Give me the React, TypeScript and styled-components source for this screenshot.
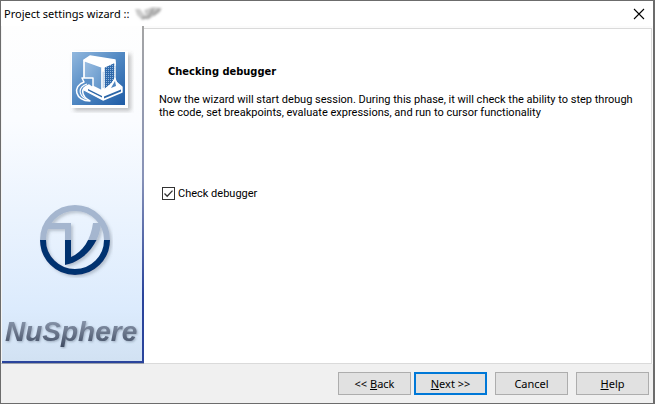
import React, { useState } from "react";
import styled, { createGlobalStyle, css } from "styled-components";

const GlobalStyle = createGlobalStyle`
  *, *::before, *::after { box-sizing: border-box; }
  html, body, #root { height: 100%; margin: 0; }
  body {
    font-family: Roboto, Tahoma, sans-serif;
    font-size: 11px;
    line-height: 13px;
    color: #000;
  }
`;

const Window = styled.form`
  display: flex;
  flex-direction: column;
  min-height: 100%;
  border: 1px solid #6c6c6c;
  border-right-width: 2px;
  background: #f0f0f0;
`;

const TitleBar = styled.header`
  display: flex;
  align-items: center;
  justify-content: space-between;
  height: 25px;
  flex: none;
  padding: 0 8px 0 3px;
  background: #fff;
`;

const Title = styled.h1`
  display: flex;
  align-items: center;
  gap: 3px;
  margin: 0;
  font: 400 11px/16px "Noto Sans", sans-serif;
`;

const CloseButton = styled.button`
  display: flex;
  padding: 0;
  border: 0;
  background: none;
`;

const Body = styled.div`
  display: flex;
  flex: 1;
  background: #fbfbfb;
`;

const Sidebar = styled.aside`
  display: flex;
  flex-direction: column;
  align-items: center;
  width: 143px;
  flex: none;
  padding: 21px 0 14px 0;
  border-left: 1px solid #f4f4f4;
  border-bottom: 1px solid #9aa0ac;
  background:
    linear-gradient(#a5a5a5, #8792b8 45%, #2a449c 80%) right / 2px 100% no-repeat,
    linear-gradient(#2a449c, #2a449c) bottom / 100% 2px no-repeat,
    linear-gradient(#fefefe, #fafcff 28%, #dcebfd 84%, #d1e1f2);
`;

const WizardIcon = styled.svg`
  align-self: flex-end;
  margin-right: 10px;
`;

const Emblem = styled.svg`
  margin-top: 89px;
  margin-left: 4px;
`;

const Wordmark = styled.svg`
  margin-top: auto;
`;

const Content = styled.main`
  flex: 1;
  margin: 2px 1px 0 0;
  padding: 36px 16px 16px 15px;
  border: 1px solid #dadada;
  border-left: 0;
  background: #fff;
`;

const Heading = styled.h2`
  margin: 0 0 14px 9px;
  font: 700 11px/14px "DejaVu Sans Condensed", Tahoma, sans-serif;
`;

const Description = styled.p`
  margin: 0;
  max-width: 480px;
`;

const CheckLabel = styled.label`
  display: flex;
  align-items: center;
  gap: 3px;
  width: max-content;
  margin: 68px 0 0 3px;
`;

const CheckBox = styled.input`
  appearance: none;
  width: 13px;
  height: 13px;
  margin: 0;
  border: 1px solid #333;
  background: #fff;

  &:checked {
    background: url("data:image/svg+xml,%3Csvg xmlns='http://www.w3.org/2000/svg' viewBox='0 0 11 11'%3E%3Cpath d='M1.5 5.5l2.7 2.7 5.3-5.6' fill='none' stroke='%23333' stroke-width='1.3'/%3E%3C/svg%3E");
  }
`;

const Footer = styled.footer`
  display: flex;
  justify-content: flex-end;
  gap: 8px;
  flex: none;
  height: 39px;
  padding: 8px 4px 0 0;
`;

const Button = styled.button<{ $primary?: boolean; $joined?: boolean }>`
  width: 73px;
  height: 23px;
  padding: 0;
  border: 1px solid #adadad;
  background: #e1e1e1;
  color: #000;
  font: 400 11px/13px "Noto Sans", sans-serif;
  ${(p) => p.$primary && css`border: 2px solid #0078d7;`}
  ${(p) => p.$joined && css`margin-right: -5px;`}
`;

export default function App() {
  const [checked, setChecked] = useState(true);
  return (
    <>
      <GlobalStyle />
      <Window onSubmit={(e: React.FormEvent) => e.preventDefault()}>
        <TitleBar>
          <Title>
            Project settings wizard ::
            <svg width="32" height="16" viewBox="0 0 32 16" aria-hidden="true">
              <defs>
                <filter id="soft"><feGaussianBlur stdDeviation="1.3" /></filter>
              </defs>
              <g filter="url(#soft)">
                <path d="M3 3h5l7 9-5 2-5-5z" fill="#ccc" />
                <path d="M12 4l9-3 9 1-3 5-5 3-7 4z" fill="#ccc" />
                <path d="M10 12l7-1 4-8M21 9l7-6" fill="none" stroke="#aaa" strokeWidth="3" />
              </g>
            </svg>
          </Title>
          <CloseButton type="button" aria-label="Close">
            <svg width="12" height="12" viewBox="0 0 12 12">
              <path d="M1 1l10 10M11 1L1 11" stroke="#000" strokeWidth="1.1" />
            </svg>
          </CloseButton>
        </TitleBar>
        <Body>
          <Sidebar>
            <WizardIcon width="66" height="66" viewBox="0 0 66 66" aria-hidden="true">
              <defs>
                <linearGradient id="tile" x1="0" y1="0" x2="1" y2="1">
                  <stop offset="0" stopColor="#92b8de" />
                  <stop offset=".5" stopColor="#4f87c2" />
                  <stop offset="1" stopColor="#1f5ca5" />
                </linearGradient>
                <linearGradient id="panel" x1="0" y1="0" x2="1" y2="1">
                  <stop offset="0" stopColor="#9dbfe2" />
                  <stop offset="1" stopColor="#5d92c8" />
                </linearGradient>
                <pattern id="mesh" width="2" height="2" patternUnits="userSpaceOnUse">
                  <rect width="2" height="2" fill="#2f69ab" />
                  <rect width="1" height="1" fill="#8fb4da" />
                </pattern>
                <filter id="tileShadow" x="-20%" y="-20%" width="150%" height="150%">
                  <feDropShadow dx="3" dy="3" stdDeviation="2" floodColor="#555" floodOpacity=".35" />
                </filter>
              </defs>
              <rect x="3" y="4" width="57" height="57" fill="#fff" filter="url(#tileShadow)" />
              <rect x="4" y="5" width="53" height="53" fill="url(#tile)" />
              <g strokeLinejoin="round" stroke="#fff">
                <path d="M16 38v5l19 10 19-8v-5l-7-6-12 8z" fill="#fff" strokeWidth="1.4" />
                <path d="M36 49.500l17-7v2l-17 7z" fill="#2b66a8" stroke="none" />
                <path d="M20 42l14 7v1.500l-14-7z" fill="#2b66a8" stroke="none" />
                <path d="M16 13l6-4 25 4v5l-12 6z" fill="#fff" strokeWidth="1.5" />
                <path d="M16 13.500l18 6.500v24l-18-9z" fill="url(#panel)" strokeWidth="1.700" />
                <path d="M36 20l11-5v19l-11 9z" fill="url(#mesh)" strokeWidth="1.400" />
                <path d="M39 44l8-13 3 8z" fill="#fff" strokeWidth="1" />
                <path d="M43 41l4-7 1 5z" fill="#4c83be" stroke="none" />
                <path d="M22 54C7 54 4 39 16 35l-2-4h11v10l-4-3c-9 3-8 11 1 16z" fill="#5a90c8" strokeWidth="1.500" />
                <path d="M18 52c-8-4-8-12 1-15" fill="none" strokeWidth="1.200" />
              </g>
            </WizardIcon>
            <Emblem width="76" height="76" viewBox="0 0 76 76" aria-hidden="true">
              <defs>
                <linearGradient id="ring" x1="0" y1="0" x2="0" y2="76" gradientUnits="userSpaceOnUse">
                  <stop offset=".5" stopColor="#a5b6cf" />
                  <stop offset=".5" stopColor="#06316f" />
                </linearGradient>
                <filter id="ringShadow">
                  <feDropShadow dx="2" dy="2" stdDeviation="1.5" floodColor="#456" floodOpacity=".3" />
                </filter>
              </defs>
              <g filter="url(#ringShadow)">
                <circle cx="38" cy="38" r="32" fill="none" stroke="url(#ring)" strokeWidth="6" />
                <path d="M8 21h26v34c12-5 20-18 22-34h8C63 42 46 60 28 63V27H8z" fill="url(#ring)" />
              </g>
            </Emblem>
            <Wordmark width="138" height="36" viewBox="0 0 138 36" role="img" aria-label="NuSphere">
              <defs>
                <linearGradient id="steel" x1="0" y1="0" x2="0" y2="1">
                  <stop offset=".1" stopColor="#8a97ad" />
                  <stop offset=".55" stopColor="#69758a" />
                  <stop offset="1" stopColor="#3f4c62" />
                </linearGradient>
                <filter id="wordShadow">
                  <feDropShadow dx="1" dy="1" stdDeviation="1" floodColor="#456" floodOpacity=".4" />
                </filter>
              </defs>
              <text
                x="1"
                y="28"
                fontFamily="Liberation Sans, Arial, sans-serif"
                fontSize="28"
                fontStyle="italic"
                fontWeight="700"
                fill="url(#steel)"
                filter="url(#wordShadow)"
              >
                NuSphere
              </text>
            </Wordmark>
          </Sidebar>
          <Content>
            <Heading>Checking debugger</Heading>
            <Description>
              Now the wizard will start debug session. During this phase, it will check the ability to step through
              the code, set breakpoints, evaluate expressions, and run to cursor functionality
            </Description>
            <CheckLabel>
              <CheckBox type="checkbox" checked={checked} onChange={(e) => setChecked(e.target.checked)} />
              Check debugger
            </CheckLabel>
          </Content>
        </Body>
        <Footer>
          <Button type="button" $joined>&lt;&lt; <u>B</u>ack</Button>
          <Button type="submit" $primary><u>N</u>ext &gt;&gt;</Button>
          <Button type="button">Cancel</Button>
          <Button type="button"><u>H</u>elp</Button>
        </Footer>
      </Window>
    </>
  );
}
